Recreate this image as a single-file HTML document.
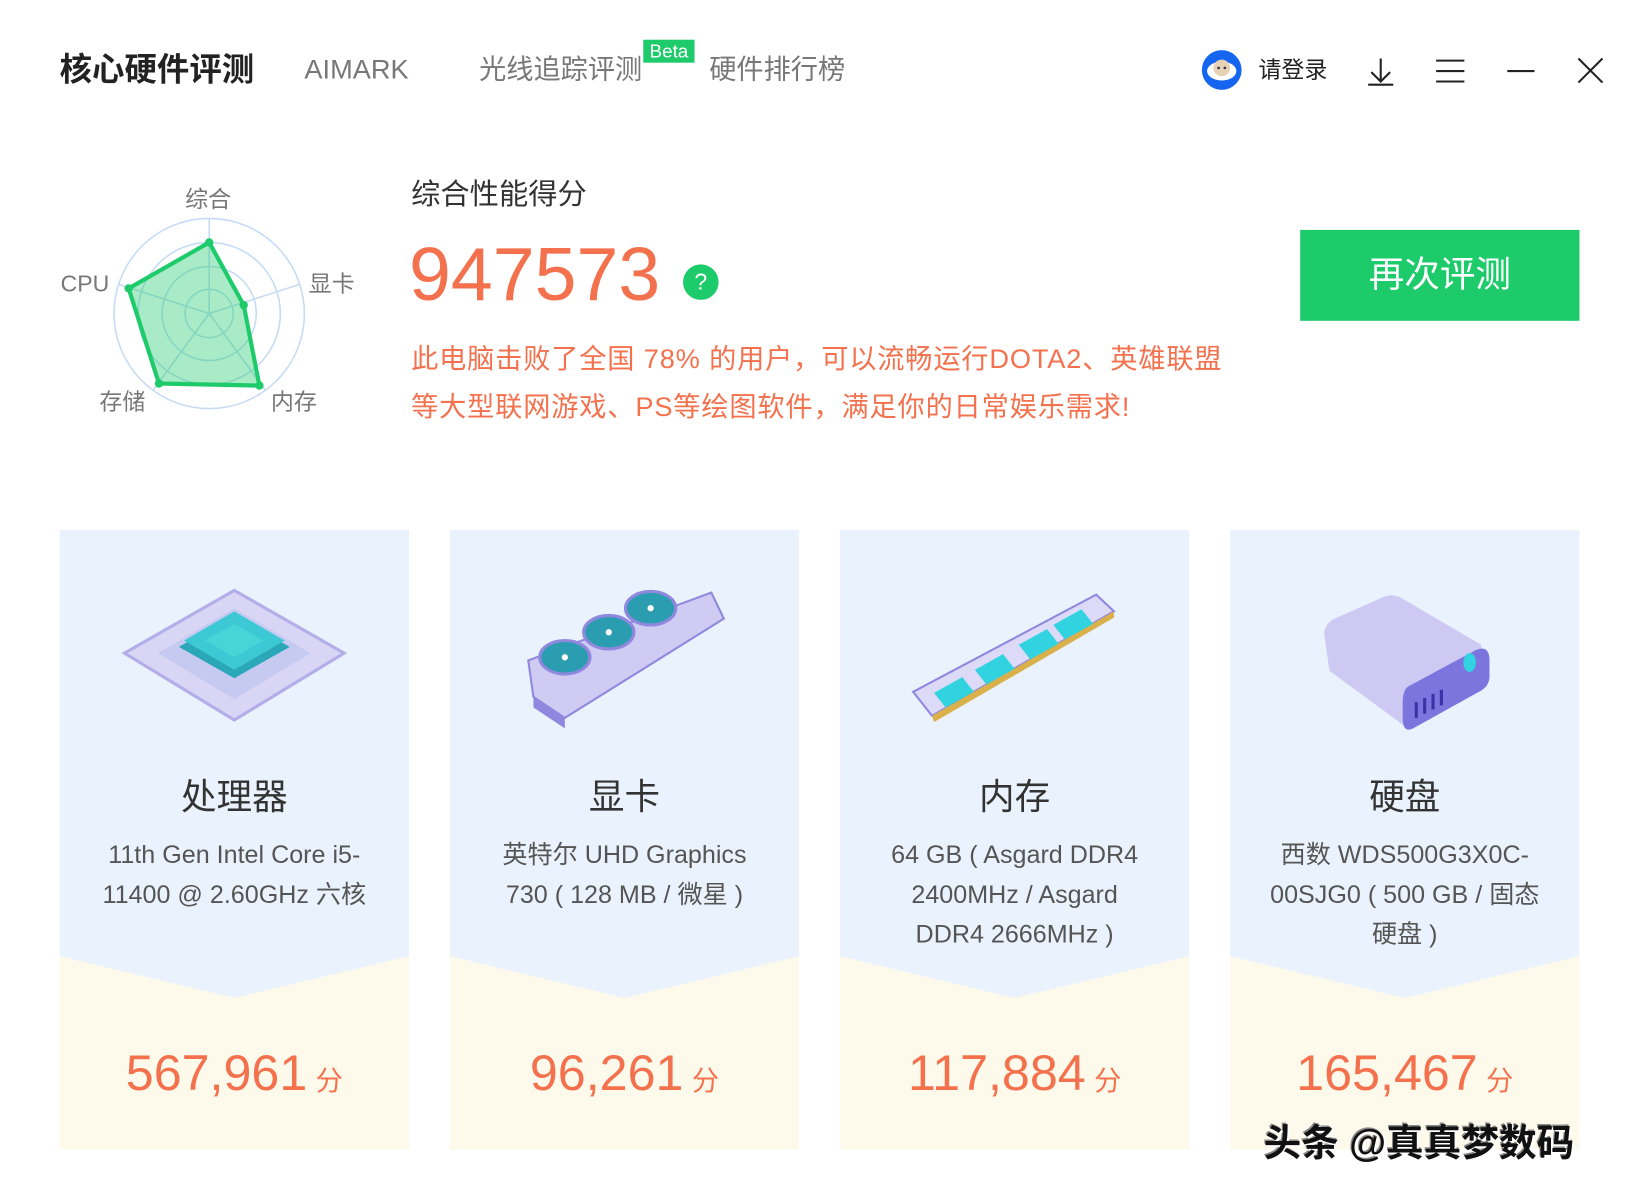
<!DOCTYPE html>
<html><head><meta charset="utf-8"><style>
*{margin:0;padding:0;box-sizing:border-box}
html,body{width:1639px;height:1200px;overflow:hidden;background:#fff}
body{font-family:"Liberation Sans","Noto Sans CJK SC",sans-serif}
#w{position:absolute;left:0;top:0;width:1560px;height:1143px;transform:scale(1.046,1.045);transform-origin:0 0}
.a{position:absolute;white-space:nowrap;line-height:1}
.card{position:absolute;top:507px;width:334px;height:593px;background:#fdfaec;overflow:hidden}
.card .top{position:absolute;left:0;top:0;width:334px;height:448px;background:#eaf3fd;clip-path:polygon(0 0,100% 0,100% 408px,50% 448px,0 408px)}
.card .t{position:absolute;left:0;width:334px;text-align:center;top:228px;font-size:34px;color:#333}
.card .d{position:absolute;left:0;width:334px;text-align:center;top:293px;font-size:24px;color:#555;line-height:38px}
.card .s{position:absolute;left:0;width:334px;text-align:center;top:497px;font-size:48px;color:#f4714e;line-height:1}
.card .s small{font-size:26px;margin-left:8px}
.card svg{position:absolute;left:0;top:40px}
.lbl{font-size:22px;color:#777}
</style></head><body><div id="w">
<div class="a" style="left:57px;top:51px;font-size:31px;font-weight:bold;color:#222">核心硬件评测</div>
<div class="a" style="left:291px;top:53px;font-size:26px;color:#777">AIMARK</div>
<div class="a" style="left:458px;top:53px;font-size:26px;color:#777">光线追踪评测</div>
<div class="a" style="left:615px;top:38px;width:49px;height:22px;background:#1ecb6b;color:#fff;font-size:18px;text-align:center;line-height:22px">Beta</div>
<div class="a" style="left:678px;top:53px;font-size:26px;color:#777">硬件排行榜</div>
<svg class="a" style="left:1148px;top:47px" width="40" height="40"><circle cx="20" cy="20" r="19" fill="#1565f0"/><ellipse cx="20" cy="21" rx="14" ry="9" fill="#fff"/><circle cx="20" cy="18" r="8" fill="#e8d2b5"/><circle cx="17" cy="18" r="1.3" fill="#335"/><circle cx="23" cy="18" r="1.3" fill="#335"/></svg>
<div class="a" style="left:1203px;top:56px;font-size:22px;color:#222">请登录</div>
<svg class="a" style="left:1300px;top:50px" width="250" height="36" fill="none" stroke="#222" stroke-width="2"><path d="M20 6V28M11 19L20 28L29 19M8 31H32"/><path d="M73 8H100M73 18H100M73 28H100"/><path d="M141 18H167"/><path d="M209 6L232 29M232 6L209 29"/></svg>
<svg class="a" style="left:50px;top:170px" width="300" height="240">
<g fill="none" stroke="#c5dbf5" stroke-width="1.5"><circle cx="150" cy="130" r="91"/><circle cx="150" cy="130" r="68"/><circle cx="150" cy="130" r="45"/><circle cx="150" cy="130" r="23"/>
<path d="M150 130V39M150 130L237 102M150 130L204 204M150 130L96 204M150 130L63 102"/></g>
<polygon points="150,62 183,122 198,199 102,197 73,106" fill="rgba(30,203,107,.38)" stroke="#1ecb6b" stroke-width="4" stroke-linejoin="round"/>
<g fill="#1ecb6b"><circle cx="150" cy="62" r="4"/><circle cx="183" cy="122" r="4"/><circle cx="198" cy="199" r="4"/><circle cx="102" cy="197" r="4"/><circle cx="73" cy="106" r="4"/></g></svg>
<div class="a lbl" style="left:177px;top:180px">综合</div>
<div class="a lbl" style="left:58px;top:261px">CPU</div>
<div class="a lbl" style="left:295px;top:261px">显卡</div>
<div class="a lbl" style="left:95px;top:374px">存储</div>
<div class="a lbl" style="left:259px;top:374px">内存</div>
<div class="a" style="left:393px;top:172px;font-size:28px;color:#333">综合性能得分</div>
<div class="a" style="left:391px;top:227px;font-size:72px;color:#f4714e">947573</div>
<div class="a" style="left:653px;top:253px;width:34px;height:34px;border-radius:50%;background:#1ecb6b;color:#fff;font-size:22px;text-align:center;line-height:34px">?</div>
<div class="a" style="left:393px;top:330px;font-size:26px;letter-spacing:0.8px;color:#f4714e">此电脑击败了全国 78% 的用户，可以流畅运行DOTA2、英雄联盟</div>
<div class="a" style="left:393px;top:376px;font-size:26px;letter-spacing:0.8px;color:#f4714e">等大型联网游戏、PS等绘图软件，满足你的日常娱乐需求!</div>
<div class="a" style="left:1243px;top:220px;width:267px;height:87px;background:#1ecb6b;color:#fff;font-size:34px;text-align:center;line-height:87px">再次评测</div>

<div class="card" style="left:57px"><div class="top"></div>
<svg width="334" height="160"><polygon points="167,18 272,78 167,142 62,78" fill="#d9d6f5" stroke="#b3aeea" stroke-width="3"/><polygon points="167,35 240,78 167,122 94,78" fill="#c6c9f0"/><polygon points="167,42 220,72 167,102 114,72" fill="#2aa7b8"/><polygon points="167,38 215,66 167,94 119,66" fill="#3cc8d4"/><polygon points="167,50 195,66 167,82 139,66" fill="#47d6d8"/></svg>
<div class="t">处理器</div><div class="d">11th Gen Intel Core i5-<br>11400 @ 2.60GHz 六核</div><div class="s">567,961<small>分</small></div></div>

<div class="card" style="left:430px"><div class="top"></div>
<svg width="334" height="160"><polygon points="75,85 250,20 262,45 110,140 80,120" fill="#cfcbf3" stroke="#8f88de" stroke-width="2"/><polygon points="80,120 110,140 110,150 80,130" fill="#8f88de"/>
<g fill="#2a9db0" stroke="#8f88de" stroke-width="3"><ellipse cx="110" cy="82" rx="24" ry="16"/><ellipse cx="152" cy="58" rx="24" ry="16"/><ellipse cx="192" cy="35" rx="24" ry="16"/></g>
<g fill="#fff"><circle cx="110" cy="82" r="3"/><circle cx="152" cy="58" r="3"/><circle cx="192" cy="35" r="3"/></g></svg>
<div class="t">显卡</div><div class="d">英特尔 UHD Graphics<br>730 ( 128 MB / 微星 )</div><div class="s">96,261<small>分</small></div></div>

<div class="card" style="left:803px"><div class="top"></div>
<svg width="334" height="160"><polygon points="70,115 245,22 262,38 88,138" fill="#dcdaf7" stroke="#8f88de" stroke-width="2"/><polygon points="88,138 262,38 262,44 90,144" fill="#d9b04a"/>
<g fill="#31d3e0"><polygon points="90,116 117,101 128,115 101,130"/><polygon points="129,94 156,79 167,93 140,108"/><polygon points="171,70 198,55 209,69 182,84"/><polygon points="204,51 231,36 242,50 215,65"/></g></svg>
<div class="t">内存</div><div class="d">64 GB ( Asgard DDR4<br>2400MHz / Asgard<br>DDR4 2666MHz )</div><div class="s">117,884<small>分</small></div></div>

<div class="card" style="left:1176px"><div class="top"></div>
<svg width="334" height="160"><path d="M90 60 Q90 50 100 45 L145 25 Q155 20 165 26 L240 70 L245 110 L170 150 L95 95 Z" fill="#cdc9f3"/><path d="M170 110 L235 75 Q248 70 248 85 L248 100 Q248 110 238 115 L175 150 Q165 155 165 140 L165 125 Q165 114 170 110Z" fill="#7d75de"/><ellipse cx="229" cy="87" rx="6" ry="9" fill="#31d3e0"/><g stroke="#3b32a8" stroke-width="3"><path d="M178 125V140M186 121V136M194 117V132M202 113V128"/></g></svg>
<div class="t">硬盘</div><div class="d">西数 WDS500G3X0C-<br>00SJG0 ( 500 GB / 固态<br>硬盘 )</div><div class="s">165,467<small>分</small></div></div>

<div class="a" style="left:1208px;top:1076px;font-size:36px;font-weight:bold;color:#111;text-shadow:2px 2px 0 #fff,-1px -1px 0 #888">头条 @真真梦数码</div>
</div></body></html>
